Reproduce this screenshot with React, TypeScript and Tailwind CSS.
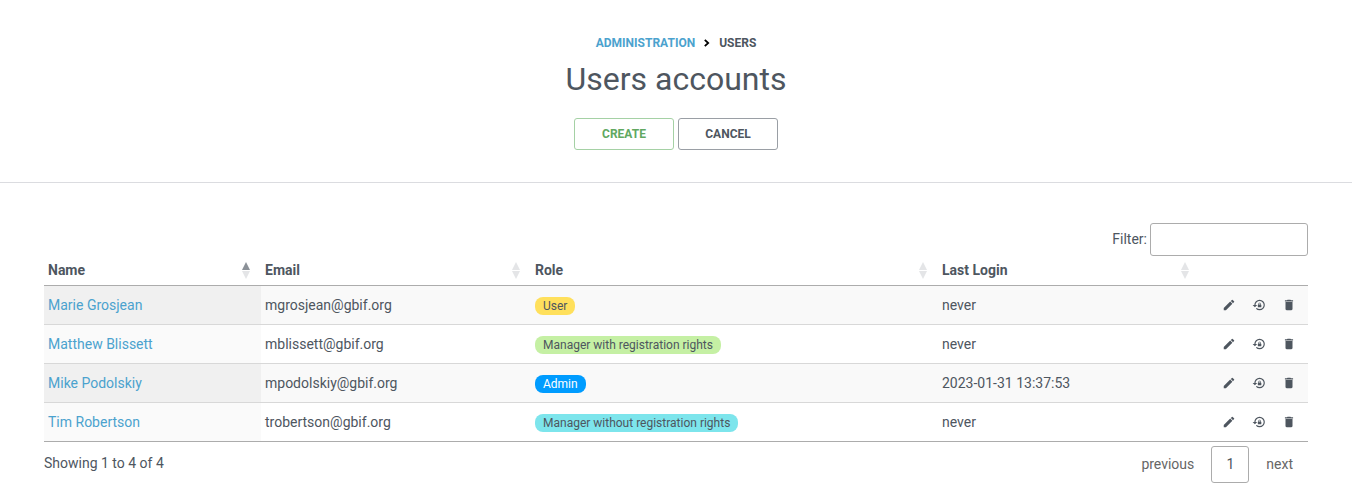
import { MdDelete, MdEdit, MdLockReset } from "react-icons/md";

const users = [
  { name: "Marie Grosjean", email: "mgrosjean@gbif.org", role: "User", badge: "bg-[#ffe05c]", login: "never" },
  { name: "Matthew Blissett", email: "mblissett@gbif.org", role: "Manager with registration rights", badge: "bg-[#c5f0a4]", login: "never" },
  { name: "Mike Podolskiy", email: "mpodolskiy@gbif.org", role: "Admin", badge: "bg-[#009cff] text-white", login: "2023-01-31 13:37:53" },
  { name: "Tim Robertson", email: "trobertson@gbif.org", role: "Manager without registration rights", badge: "bg-[#7de5ec]", login: "never" },
];

const columns = "grid grid-cols-[217px_270px_407px_262px_108px]";

function SortArrows({ ascending = false }: { ascending?: boolean }) {
  return (
    <svg className="mr-[11.5px] h-[17px] w-2" viewBox="0 0 8 17">
      <path d="M4 0 8 8H0Z" className={ascending ? "fill-[#8b9198]" : "fill-[#e4e5e7]"} />
      <path d="M0 9h8l-4 8Z" className="fill-[#e4e5e7]" />
    </svg>
  );
}

function Heading({ label, ascending }: { label: string; ascending?: boolean }) {
  return (
    <div className="flex items-center justify-between pl-1">
      <span className="pb-0.5">{label}</span>
      <SortArrows ascending={ascending} />
    </div>
  );
}

export default function App() {
  return (
    <div className="h-[499px] overflow-hidden bg-white font-[Roboto,sans-serif] text-sm text-[#4e565f]">
      <header className="flex h-[183px] flex-col items-center border-b border-[#dbdce0] pt-[35px]">
        <nav className="flex h-4 items-center text-xs font-bold">
          <a className="text-[#4ba2ce]">ADMINISTRATION</a>
          <svg className="mx-2 h-2 w-2" viewBox="0 0 8 8" fill="none" stroke="#000" strokeWidth="1.8">
            <path d="m1.8.8 3.4 3.2-3.4 3.2" />
          </svg>
          <span>USERS</span>
        </nav>
        <h1 className="mt-2 text-[32px] leading-10">Users accounts</h1>
        <div className="mt-[19px] flex gap-1 text-xs font-bold">
          <button className="h-8 w-[100px] rounded-[3px] border border-[#a5d1a5] text-[#61a861]">CREATE</button>
          <button className="h-8 w-[100px] rounded-[3px] border border-[#9a9fa5]">CANCEL</button>
        </div>
      </header>
      <main className="px-11 pt-10">
        <label className="flex h-[33px] items-center justify-end gap-[3px]">
          <span className="pb-0.5">Filter:</span>
          <input className="h-[33px] w-[158px] rounded-[3px] border border-[#acacac] bg-white" />
        </label>
        <div className={`${columns} h-[30px] border-b border-[#acacac] font-bold`}>
          <Heading label="Name" ascending />
          <Heading label="Email" />
          <Heading label="Role" />
          <Heading label="Last Login" />
        </div>
        <div className="border-b border-[#acacac]">
          {users.map((user) => (
            <div
              key={user.name}
              className={`${columns} group h-[39px] items-stretch border-b border-[#d8d8d8] odd:bg-[#f9f9f9] last:h-[38px] last:border-b-0`}
            >
              <div className="flex items-center bg-[#fafafa] pl-1 text-[#4ba2ce] group-odd:bg-[#f0f0f0]">{user.name}</div>
              <div className="flex items-center pl-1">{user.email}</div>
              <div className="flex items-center pl-1">
                <span className={`mt-0.5 flex h-[18px] items-center rounded-[8px] px-2 text-xs ${user.badge}`}>{user.role}</span>
              </div>
              <div className="flex items-center pl-1">{user.login}</div>
              <div className="flex items-center gap-4 pl-[22px]">
                <MdEdit size={14} />
                <MdLockReset size={14} />
                <MdDelete size={14} />
              </div>
            </div>
          ))}
        </div>
        <footer className="flex justify-between">
          <span className="mt-[11px]">Showing 1 to 4 of 4</span>
          <div className="mt-1 flex h-[37px] items-center text-[#666]">
            <span className="mr-[17px] pb-0.5">previous</span>
            <span className="flex h-[37px] w-[38px] items-center justify-center rounded-[3px] border border-[#acacac] pb-0.5 text-[#4e565f]">1</span>
            <span className="mr-[15px] ml-[17px] pb-0.5">next</span>
          </div>
        </footer>
      </main>
    </div>
  );
}
